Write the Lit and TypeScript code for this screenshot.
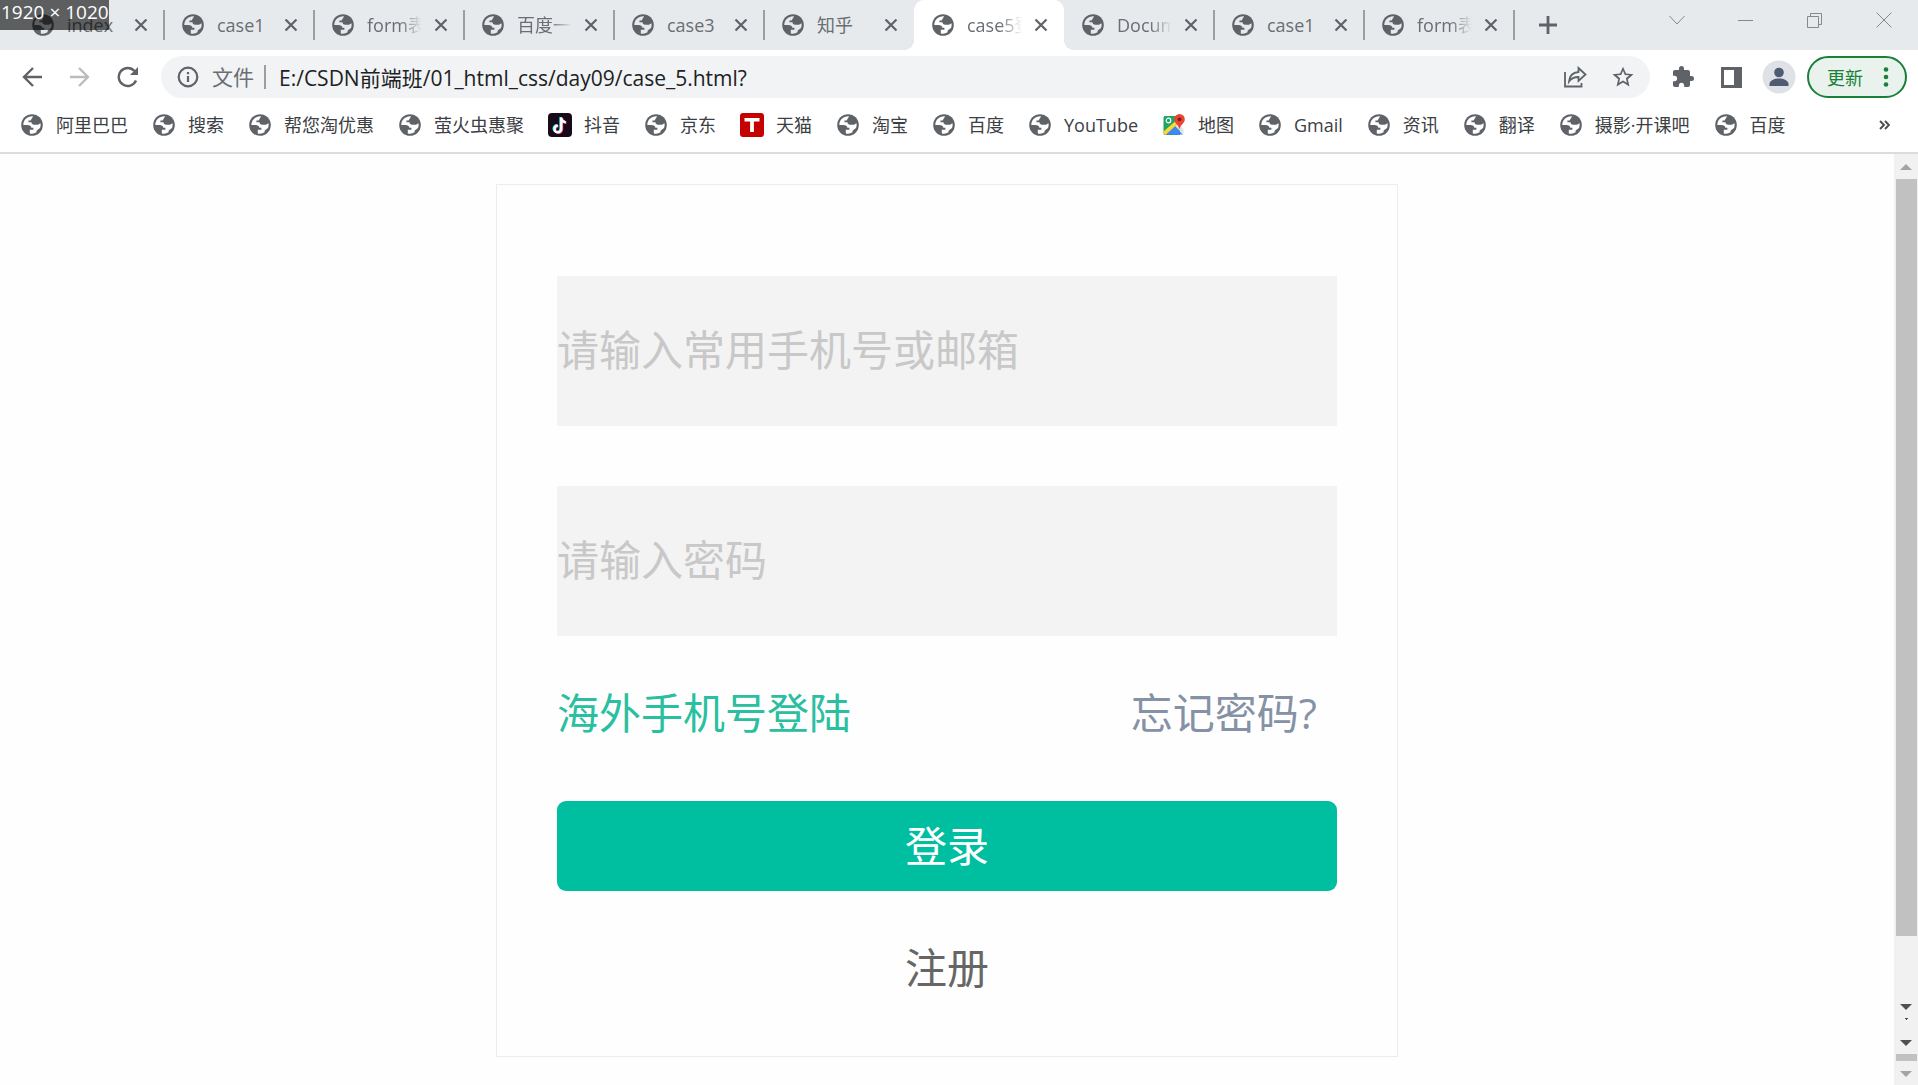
import { LitElement, html, css, svg, nothing } from "lit";
import { customElement } from "lit/decorators.js";

const globe = html`<svg class="globe" viewBox="0 0 22 22" aria-hidden="true">
  <circle cx="11" cy="11" r="10.8" fill="#5f6368" />
  <path
    fill="var(--land, #fff)"
    d="M12 2.400C6.600 2 2.300 6 2.300 11h4.200c2.200 0 3.600.9 3.900 2.700h2v2H8.800v3.700c.8.200 1.500.3 2.200.3 1.700 0 3.200-.5 4.500-1.400l.2-1.900 3.300-2.400c.7-1.700.8-3.200.4-4.700l-2.400 1.400h-3.700c-1.800 0-2.800-1-2.800-2.500H7.400V6.500h2.200z"
  />
</svg>`;

const closeIcon = html`<svg width="14" height="14" viewBox="0 0 14 14" aria-hidden="true">
  <path d="M1.500 1.500l11 11M12.500 1.500l-11 11" stroke="#5f6368" stroke-width="2.200" />
</svg>`;

const douyin = html`<svg width="24" height="24" viewBox="0 0 24 24" aria-hidden="true">
  <rect width="24" height="24" rx="4" fill="#170b1a" />
  <g fill="none" stroke-width="2.400">
    <path d="M12.500 4v11.500a3.400 3.400 0 1 1-3.400-3.400M12.500 4.500c.4 2.500 2 4 4.500 4.200" stroke="#25f4ee" />
    <path d="M14 5v11.500a3.400 3.400 0 1 1-3.400-3.400M14 5.500c.4 2.500 2 4 4.500 4.200" stroke="#fe2c55" />
    <path d="M13.300 4.500V16a3.400 3.400 0 1 1-3.400-3.400M13.300 5c.4 2.500 2 4 4.500 4.200" stroke="#fff" />
  </g>
</svg>`;

const tmall = html`<svg width="24" height="24" viewBox="0 0 24 24" aria-hidden="true">
  <rect width="24" height="24" rx="3" fill="#c40000" />
  <path d="M4.500 5h15v3.500h-5.600V19h-3.800V8.500H4.500z" fill="#fff" />
</svg>`;

const maps = html`<svg width="24" height="24" viewBox="0 0 24 24" aria-hidden="true">
  <path d="M3 3h15v19H3a1.500 1.500 0 0 1-1.500-1.500v-16A1.500 1.500 0 0 1 3 3z" fill="#1fa463" />
  <path d="M12 13l9 8.500H3.500z" fill="#4285f4" />
  <path d="M16 11l5.500 5v5.500L13 13z" fill="#dfe3e8" />
  <path d="M1.500 18.500L13 8.500l2.500 2.500L3.500 22 1.500 21z" fill="#fdd835" />
  <circle cx="6.500" cy="7.500" r="2.300" fill="none" stroke="#fff" stroke-width="1.200" />
  <path d="M17.500 1a5.300 5.300 0 0 1 5.300 5.300c0 4-4.300 5.200-5.300 10.200-1-5-5.300-6.200-5.300-10.200A5.300 5.300 0 0 1 17.500 1z" fill="#e84436" />
  <circle cx="17.500" cy="6.300" r="1.900" fill="#891b14" />
</svg>`;

const tabs = ["index", "case1", "form表单", "百度一下", "case3", "知乎", "case5登录", "Document", "case1", "form表单"];
const ACTIVE_TAB = 6;

const bookmarks: Array<[string, unknown]> = [
  ["阿里巴巴", globe],
  ["搜索", globe],
  ["帮您淘优惠", globe],
  ["萤火虫惠聚", globe],
  ["抖音", douyin],
  ["京东", globe],
  ["天猫", tmall],
  ["淘宝", globe],
  ["百度", globe],
  ["YouTube", globe],
  ["地图", maps],
  ["Gmail", globe],
  ["资讯", globe],
  ["翻译", globe],
  ["摄影·开课吧", globe],
  ["百度", globe],
];

const reset = css`
  :host,
  * {
    box-sizing: border-box;
  }
  button {
    border: 0;
    padding: 0;
    margin: 0;
    background: none;
    color: inherit;
    font: inherit;
    display: flex;
    align-items: center;
    justify-content: center;
    flex: none;
  }
  svg {
    display: block;
    flex: none;
  }
  a {
    color: inherit;
    text-decoration: none;
  }
  .globe {
    width: 22px;
    height: 22px;
    margin: 0 1px;
  }
`;

@customElement("tab-strip")
export class TabStrip extends LitElement {
  static styles = [
    reset,
    css`
      :host {
        display: flex;
        height: 50px;
        background: #e7eaed;
        padding-left: 14px;
        --land: #e7eaed;
      }
      .tabs {
        display: flex;
      }
      .tab {
        position: relative;
        display: flex;
        align-items: center;
        width: 150px;
        padding-left: 17px;
        color: #6a6e73;
      }
      .label {
        width: 55px;
        margin: 0 10px 0 12px;
        overflow: hidden;
        white-space: nowrap;
        line-height: 28px;
        font-size: 18px;
        -webkit-mask-image: linear-gradient(90deg, #000 60%, transparent);
        mask-image: linear-gradient(90deg, #000 60%, transparent);
      }
      .short {
        -webkit-mask-image: none;
        mask-image: none;
      }
      .close {
        width: 18px;
        height: 18px;
      }
      .divided::after {
        content: "";
        position: absolute;
        right: -1px;
        top: 10px;
        width: 2px;
        height: 30px;
        background: #9b9fa3;
      }
      .active {
        background: #fff;
        border-radius: 10px 10px 0 0;
        --land: #fff;
      }
      .active::before,
      .active::after {
        content: "";
        position: absolute;
        bottom: 0;
        width: 10px;
        height: 10px;
      }
      .active::before {
        left: -10px;
        background: radial-gradient(circle at 0 0, transparent 10px, #fff 10px);
      }
      .active::after {
        right: -10px;
        background: radial-gradient(circle at 100% 0, transparent 10px, #fff 10px);
      }
      .add {
        width: 30px;
        margin-left: 19px;
      }
      .window {
        display: flex;
        margin-left: auto;
        height: 40px;
      }
      .window button {
        width: 69px;
      }
      .size {
        position: absolute;
        left: 0;
        top: 0;
        width: 109px;
        height: 30px;
        padding-left: 1px;
        background: rgba(0, 0, 0, 0.6);
        color: #fff;
        font-size: 19px;
        line-height: 25px;
        white-space: nowrap;
      }
    `,
  ];

  render() {
    return html`
      <div class="tabs" role="tablist">
        ${tabs.map((label, i) => {
          const divided = i !== ACTIVE_TAB && i !== ACTIVE_TAB - 1;
          const short = /^(index|case\d|知乎)$/.test(label);
          return html`<div
            class="tab ${i === ACTIVE_TAB ? "active" : ""} ${divided ? "divided" : ""}"
            role="tab"
            aria-selected=${i === ACTIVE_TAB ? "true" : "false"}
          >
            ${globe}
            <span class="label ${short ? "short" : ""}">${label}</span>
            <button class="close" aria-label="关闭">${closeIcon}</button>
          </div>`;
        })}
      </div>
      <button class="add" aria-label="新标签页">
        <svg width="18" height="18" viewBox="0 0 18 18"><path d="M9 0v18M0 9h18" stroke="#5f6368" stroke-width="2.800" /></svg>
      </button>
      <div class="window">
        <button aria-label="搜索标签页">
          <svg width="16" height="10" viewBox="0 0 16 10"><path d="M.5 1L8 9l7.500-8" fill="none" stroke="#85898d" /></svg>
        </button>
        <button aria-label="最小化">
          <svg width="15" height="15" viewBox="0 0 15 15"><path d="M0 7.500h15" stroke="#85898d" /></svg>
        </button>
        <button aria-label="还原">
          <svg width="15" height="15" viewBox="0 0 15 15">
            <path d="M.5 3.500h11v11H.5zM3.500 3.500v-3h11v11h-3" fill="none" stroke="#85898d" />
          </svg>
        </button>
        <button aria-label="关闭窗口">
          <svg width="16" height="16" viewBox="0 0 16 16"><path d="M.5.5l15 15M15.500.5l-15 15" stroke="#85898d" /></svg>
        </button>
      </div>
      <div class="size">1920 × 1020</div>
    `;
  }
}

@customElement("tool-bar")
export class ToolBar extends LitElement {
  static styles = [
    reset,
    css`
      :host {
        display: flex;
        align-items: center;
        height: 54px;
        padding: 0 11px 0 8px;
        background: #fff;
      }
      .nav {
        width: 48px;
        height: 42px;
      }
      .omnibox {
        display: flex;
        align-items: center;
        flex: 1;
        height: 42px;
        margin: 0 9px;
        padding: 0 3px 0 16px;
        border-radius: 21px;
        background: #f1f3f4;
      }
      .scheme {
        margin-left: 13px;
        padding-right: 10px;
        border-right: 2px solid #9b9fa3;
        line-height: 24px;
        font-size: 21px;
        color: #6a6e73;
      }
      .url {
        flex: 1;
        min-width: 0;
        margin-left: 13px;
        padding: 0;
        border: 0;
        outline: 0;
        background: none;
        font: inherit;
        font-size: 21px;
        color: #202124;
      }
      .update {
        width: 100px;
        height: 42px;
        margin-left: 4px;
        padding: 0 16px 0 18px;
        justify-content: space-between;
        border: 2px solid #188038;
        border-radius: 21px;
        background: #e9f2ec;
        color: #188038;
        font-size: 18px;
      }
    `,
  ];

  render() {
    return html`
      <button class="nav" aria-label="后退">
        <svg width="20" height="20" viewBox="0 0 20 20"><path d="M20 10H2M11 1l-9 9 9 9" fill="none" stroke="#5f6368" stroke-width="2.400" /></svg>
      </button>
      <button class="nav" aria-label="前进">
        <svg width="20" height="20" viewBox="0 0 20 20"><path d="M0 10h18M9 1l9 9-9 9" fill="none" stroke="#babcbe" stroke-width="2.400" /></svg>
      </button>
      <button class="nav" aria-label="重新加载">
        <svg width="22" height="22" viewBox="0 0 22 22">
          <path d="M19 14.500A9 9 0 1 1 17.500 5" fill="none" stroke="#5f6368" stroke-width="2.400" />
          <path d="M21 1v8h-8z" fill="#5f6368" />
        </svg>
      </button>
      <div class="omnibox">
        <svg width="22" height="22" viewBox="0 0 22 22" aria-hidden="true">
          <circle cx="11" cy="11" r="9.300" fill="none" stroke="#5f6368" stroke-width="2.200" />
          <path d="M11 10v6M11 6v2.300" stroke="#5f6368" stroke-width="2.200" />
        </svg>
        <span class="scheme">文件</span>
        <input class="url" aria-label="地址" value="E:/CSDN前端班/01_html_css/day09/case_5.html?" />
        <button class="nav" aria-label="分享">
          <svg width="24" height="22" viewBox="0 0 24 22" fill="none" stroke="#5f6368" stroke-width="1.800">
            <path d="M2 6v14.500h16.500V17" />
            <path d="M15.500 2l7 6.500-7 6.500v-4c-4 0-7 1-9.500 4.500 .5-5.500 4-9 9.500-9.500z" />
          </svg>
        </button>
        <button class="nav" aria-label="收藏">
          <svg width="24" height="24" viewBox="0 0 24 24">
            <path
              fill="#5f6368"
              d="M22.500 9.300l-7.500-.7L12 1.700 9 8.600l-7.500.7 5.700 4.900-1.700 7.300L12 17.600l6.500 3.900-1.700-7.300zM12 15.400l-3.900 2.400 1-4.500-3.400-3 4.500-.4L12 5.800l1.800 4.100 4.500.4-3.400 3 1 4.500z"
            />
          </svg>
        </button>
      </div>
      <button class="nav" aria-label="扩展程序">
        <svg width="24" height="24" viewBox="0 0 24 24">
          <path
            fill="#5f6368"
            d="M20.500 11H19V7c0-1.100-.9-2-2-2h-4V3.500a2.500 2.500 0 0 0-5 0V5H4c-1.100 0-2 .9-2 2v3.800h1.500c1.500 0 2.700 1.200 2.700 2.700S5 16.200 3.500 16.200H2V20c0 1.100.9 2 2 2h3.800v-1.500c0-1.500 1.200-2.700 2.700-2.700s2.700 1.200 2.700 2.700V22H17c1.100 0 2-.9 2-2v-4h1.500a2.500 2.500 0 0 0 0-5z"
          />
        </svg>
      </button>
      <button class="nav" aria-label="侧边栏">
        <svg width="21" height="21" viewBox="0 0 21 21"><path fill="#5f6368" fill-rule="evenodd" d="M0 0h21v21H0zM3 3v15h10V3z" /></svg>
      </button>
      <button class="nav" aria-label="个人资料">
        <svg width="34" height="34" viewBox="0 0 34 34">
          <circle cx="17" cy="17" r="16.500" fill="#dee1e6" />
          <circle cx="17" cy="12.500" r="4.800" fill="#4f5b70" />
          <path d="M7.500 26v-2c0-3.500 5-5.500 9.500-5.500s9.500 2 9.500 5.500v2z" fill="#4f5b70" />
        </svg>
      </button>
      <button class="update">
        <span>更新</span>
        <svg width="6" height="20" viewBox="0 0 6 20" fill="#188038">
          <circle cx="3" cy="2.500" r="2.300" /><circle cx="3" cy="10" r="2.300" /><circle cx="3" cy="17.500" r="2.300" />
        </svg>
      </button>
    `;
  }
}

@customElement("bookmark-bar")
export class BookmarkBar extends LitElement {
  static styles = [
    reset,
    css`
      :host {
        display: flex;
        align-items: center;
        gap: 24px;
        height: 50px;
        padding: 0 28px 6px 20px;
        border-bottom: 2px solid #dadce0;
        background: #fff;
        font-size: 18px;
        line-height: 26px;
        color: #3c4043;
        white-space: nowrap;
      }
      .mark {
        display: flex;
        align-items: center;
        gap: 12px;
      }
      .more {
        margin-left: auto;
      }
    `,
  ];

  render() {
    return html`
      ${bookmarks.map(([label, icon]) => html`<a class="mark" href="#">${icon}<span>${label}</span></a>`)}
      <button class="more" aria-label="更多书签">
        <svg width="11" height="10" viewBox="0 0 11 10"><path d="M1 1l4 4-4 4M6 1l4 4-4 4" fill="none" stroke="#4a4d51" stroke-width="1.900" /></svg>
      </button>
    `;
  }
}

@customElement("login-card")
export class LoginCard extends LitElement {
  static styles = [
    reset,
    css`
      :host {
        display: block;
        width: 902px;
        max-width: 100%;
        padding: 91px 60px 52px;
        border: 1px solid #ededed;
        font-size: 42px;
        line-height: 60px;
      }
      .form {
        display: flex;
        flex-direction: column;
      }
      .field {
        width: 100%;
        height: 150px;
        margin-bottom: 60px;
        padding: 0 0 4px;
        border: 0;
        border-radius: 0;
        outline: 0;
        background: #f3f3f3;
        font: inherit;
      }
      .field::placeholder {
        color: #c8c8c8;
        opacity: 1;
      }
      .links {
        display: flex;
        justify-content: space-between;
        margin: -19px 0 52px;
        padding-right: 20px;
        line-height: 72px;
      }
      .overseas {
        color: #2abf9e;
      }
      .forgot {
        color: #8592a6;
      }
      .login {
        height: 90px;
        border-radius: 9px;
        background: #00bea0;
        color: #fff;
      }
      .register {
        margin: 41px auto 0;
        line-height: 72px;
        color: #666;
      }
    `,
  ];

  render() {
    return html`<form class="form">
      <input class="field" type="text" aria-label="手机号或邮箱" placeholder="请输入常用手机号或邮箱" />
      <input class="field" type="password" aria-label="密码" placeholder="请输入密码" />
      <div class="links">
        <a class="overseas" href="#">海外手机号登陆</a>
        <a class="forgot" href="#">忘记密码?</a>
      </div>
      <button class="login" type="button">登录</button>
      <a class="register" href="#">注册</a>
    </form>`;
  }
}

@customElement("page-scrollbar")
export class PageScrollbar extends LitElement {
  static styles = css`
    :host {
      display: flex;
      flex-direction: column;
      align-items: center;
      width: 24px;
      background: #f1f1f1;
    }
    svg {
      display: block;
      flex: none;
    }
    .cap {
      padding: 10px 0 9px;
    }
    .thumb {
      width: 21px;
      flex: 757;
      background: #c1c1c1;
    }
    .track {
      flex: 68;
    }
    .tail {
      display: flex;
      flex-direction: column;
      align-items: center;
    }
    .dot {
      margin: 8px 0 20px;
    }
    .piece {
      width: 21px;
      height: 7px;
      margin: 8px 0 10px;
      background: #c1c1c1;
    }
    .last {
      margin-bottom: 8px;
    }
  `;

  render() {
    const down = (fill: string, cls: string) =>
      html`<svg class=${cls || nothing} width="12" height="6" viewBox="0 0 12 6">${svg`<path d="M0 0h12L6 6z" fill=${fill} />`}</svg>`;
    return html`
      <svg class="cap" width="12" height="6" viewBox="0 0 12 6"><path d="M0 6h12L6 0z" fill="#a3a3a3" /></svg>
      <div class="thumb"></div>
      <div class="track"></div>
      <div class="tail">
        ${down("#505050", "")}
        <svg class="dot" width="3" height="2" viewBox="0 0 3 2"><path d="M0 0h3v1H2v1H1V1H0z" fill="#505050" /></svg>
        ${down("#505050", "")}
        <div class="piece"></div>
        ${down("#a3a3a3", "last")}
      </div>
    `;
  }
}

@customElement("app-root")
export class AppRoot extends LitElement {
  static styles = css`
    :host {
      display: flex;
      flex-direction: column;
      min-height: 100vh;
      background: #fff;
      font-family: "Open Sans", "Noto Sans CJK SC", sans-serif;
    }
    .viewport {
      display: flex;
      flex: 1;
    }
    .page {
      display: flex;
      flex: 1;
      justify-content: center;
      align-items: flex-start;
      padding: 30px 0 28px;
      background: #fefefe;
    }
  `;

  render() {
    return html`
      <tab-strip></tab-strip>
      <tool-bar></tool-bar>
      <bookmark-bar></bookmark-bar>
      <div class="viewport">
        <main class="page"><login-card></login-card></main>
        <page-scrollbar></page-scrollbar>
      </div>
    `;
  }
}
